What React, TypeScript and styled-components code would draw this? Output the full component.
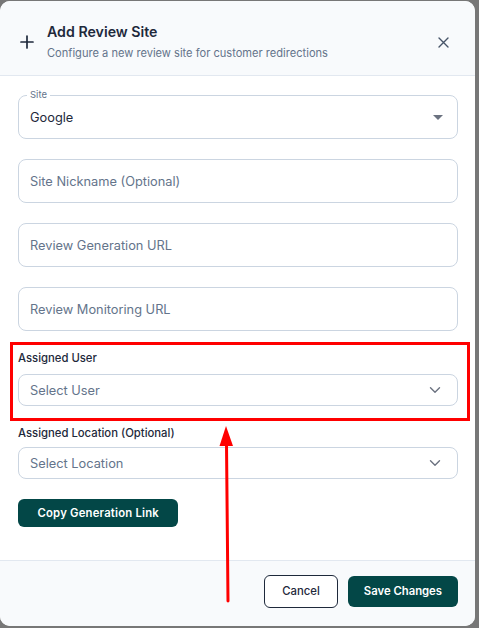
import React from "react";
import styled, { createGlobalStyle } from "styled-components";

const GlobalStyle = createGlobalStyle`
  *, *::before, *::after {
    box-sizing: border-box;
  }
  html, body {
    margin: 0;
    padding: 0;
    background: #777777;
    font-family: Inter, "Noto Sans", Arial, sans-serif;
    -webkit-font-smoothing: antialiased;
  }
`;

const Dialog = styled.div`
  position: relative;
  width: 475px;
  height: 625px;
  margin-top: 1px;
  background: #ffffff;
  border-radius: 10px;
  overflow: hidden;
  display: flex;
  flex-direction: column;
`;

const Header = styled.div`
  height: 75px;
  padding: 8px 26px 0 20px;
  display: flex;
  align-items: center;
  gap: 13px;
  background: #f8fafc;
  border-bottom: 1px solid #e2e8f0;
`;

const TitleBlock = styled.div`
  flex: 1;
  display: flex;
  flex-direction: column;
  gap: 4px;
`;

const Title = styled.h2`
  margin: 0;
  font-size: 14.2px;
  line-height: 18px;
  font-weight: 600;
  color: #1e293b;
`;

const Subtitle = styled.p`
  margin: 0;
  font-size: 11.1px;
  line-height: 16px;
  color: #64748b;
`;

const IconButton = styled.button`
  border: 0;
  background: none;
  padding: 0;
  display: flex;
  color: #475569;
`;

const Body = styled.div`
  flex: 1;
  padding: 19px 17px 0 18px;
  display: flex;
  flex-direction: column;
  gap: 20px;
`;

const Outlined = styled.div<{ $placeholder?: boolean }>`
  position: relative;
  height: 44px;
  border: 1px solid #cbd5e1;
  border-radius: 8px;
  display: flex;
  align-items: center;
  padding: 0 14px 0 11px;
  font-size: 12.8px;
  color: ${(p) => (p.$placeholder ? "#64748b" : "#1e293b")};
`;

const FloatLabel = styled.span`
  position: absolute;
  top: -7px;
  left: 8px;
  padding: 0 3px;
  background: #ffffff;
  font-size: 9.5px;
  line-height: 12px;
  color: #64748b;
`;

const Grow = styled.span`
  flex: 1;
`;

const Group = styled.div<{ $gap?: number }>`
  position: relative;
  display: flex;
  flex-direction: column;
  gap: ${(p) => p.$gap ?? 8}px;
`;

const GroupLabel = styled.label`
  font-size: 11.3px;
  line-height: 15px;
  font-weight: 500;
  color: #1e293b;
`;

const Select = styled.div`
  height: 32px;
  border: 1px solid #cbd5e1;
  border-radius: 8px;
  display: flex;
  align-items: center;
  padding: 0 16px 0 11px;
  font-size: 12.8px;
  color: #64748b;
`;

const Highlight = styled.div`
  position: absolute;
  left: -8px;
  right: -12px;
  top: -9px;
  bottom: -15px;
  border: 3px solid #ff0000;
  pointer-events: none;
`;

const PrimaryButton = styled.button<{ $start?: boolean }>`
  align-self: ${(p) => (p.$start ? "flex-start" : "auto")};
  height: ${(p) => (p.$start ? "28px" : "31px")};
  padding: 0 ${(p) => (p.$start ? "19.5px" : "16px")};
  border: 0;
  border-radius: 6px;
  background: #034747;
  color: #ffffff;
  font-family: inherit;
  font-size: 11.3px;
  font-weight: 600;
  letter-spacing: ${(p) => (p.$start ? "0.2px" : "0")};
`;

const Footer = styled.div`
  height: 66px;
  background: #f8fafc;
  border-top: 1px solid #e2e8f0;
  display: flex;
  align-items: center;
  justify-content: flex-end;
  gap: 10px;
  padding: 0 17px 5px 0;
`;

const OutlineButton = styled.button`
  height: 33px;
  padding: 0 17px;
  border: 1px solid #1e293b;
  border-radius: 6px;
  background: #ffffff;
  color: #1e293b;
  font-family: inherit;
  font-size: 11.3px;
  font-weight: 500;
`;

const Arrow = styled.svg`
  position: absolute;
  left: 218px;
  top: 425px;
  pointer-events: none;
`;

const Chevron = () => (
  <svg width="12" height="8" viewBox="0 0 12 8" fill="none">
    <path d="M1.5 1.8 6 6.2l4.5-4.4" stroke="#6b7280" strokeWidth="1.4" strokeLinecap="round" strokeLinejoin="round" />
  </svg>
);

const fields = ["Site Nickname (Optional)", "Review Generation URL", "Review Monitoring URL"];

export default function App() {
  return (
    <>
      <GlobalStyle />
      <Dialog>
        <Header>
          <svg width="14" height="14" viewBox="0 0 14 14">
            <path d="M7 1v12M1 7h12" stroke="#1e293b" strokeWidth="1.7" strokeLinecap="round" />
          </svg>
          <TitleBlock>
            <Title>Add Review Site</Title>
            <Subtitle>Configure a new review site for customer redirections</Subtitle>
          </TitleBlock>
          <IconButton>
            <svg width="11" height="11" viewBox="0 0 11 11">
              <path d="M1 1l9 9M10 1l-9 9" stroke="#475569" strokeWidth="1.4" strokeLinecap="round" />
            </svg>
          </IconButton>
        </Header>

        <Body>
          <Outlined>
            <FloatLabel>Site</FloatLabel>
            <Grow>Google</Grow>
            <svg width="10" height="5" viewBox="0 0 10 5">
              <path d="M0 0h10L5 5z" fill="#6b7280" />
            </svg>
          </Outlined>

          {fields.map((f) => (
            <Outlined key={f} $placeholder>
              {f}
            </Outlined>
          ))}

          <Group>
            <GroupLabel>Assigned User</GroupLabel>
            <Select>
              <Grow>Select User</Grow>
              <Chevron />
            </Select>
            <Highlight />
          </Group>

          <Group $gap={6}>
            <GroupLabel>Assigned Location (Optional)</GroupLabel>
            <Select>
              <Grow>Select Location</Grow>
              <Chevron />
            </Select>
          </Group>

          <PrimaryButton $start>Copy Generation Link</PrimaryButton>
        </Body>

        <Footer>
          <OutlineButton>Cancel</OutlineButton>
          <PrimaryButton>Save Changes</PrimaryButton>
        </Footer>

        <Arrow width="20" height="180" viewBox="0 0 20 180">
          <path d="M10 175 L8.5 18" stroke="#ff0000" strokeWidth="3" strokeLinecap="round" />
          <path d="M8 0 L15 20 L1.5 20 Z" fill="#ff0000" />
        </Arrow>
      </Dialog>
    </>
  );
}
